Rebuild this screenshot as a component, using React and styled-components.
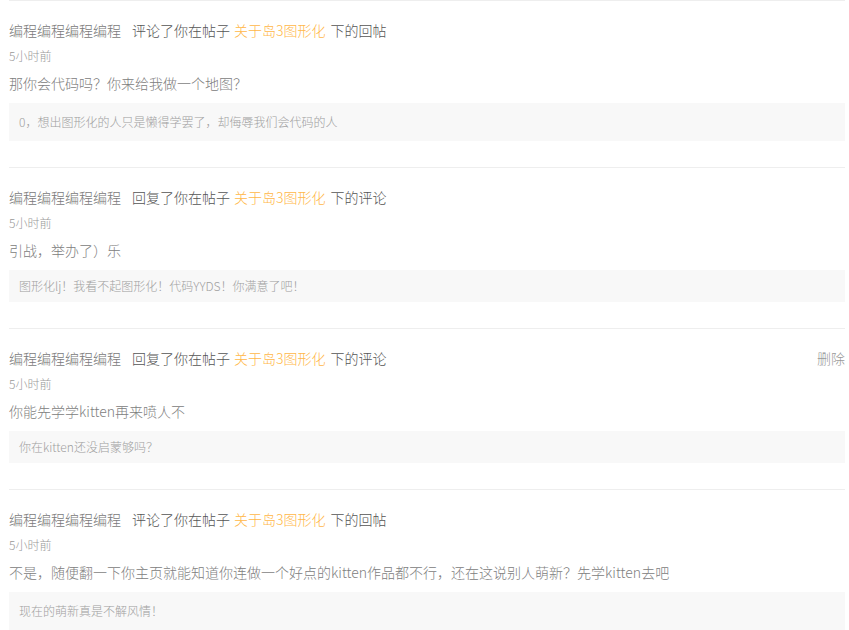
import React from 'react';
import styled, { createGlobalStyle } from 'styled-components';

const GlobalStyle = createGlobalStyle`
	html, body {
		margin: 0;
		padding: 0;
		background: #fff;
	}
	body {
		font-family: "Noto Sans CJK SC", "Noto Sans", sans-serif;
		font-weight: 300;
	}
`;

const List = styled.div`
	padding: 0 4px 0 9px;
	height: 630px;
	overflow: hidden;
`;

const Item = styled.div`
	border-top: 1px solid #eeeeee;
	padding: 20px 0 26px;
`;

const Head = styled.div`
	display: flex;
	align-items: flex-start;
	justify-content: space-between;
	height: 22px;
	font-size: 14px;
	line-height: 18px;
`;

const HeadText = styled.div`
	color: #555;
	white-space: nowrap;
`;

const Name = styled.span`
	color: #7a7a7a;
	margin-right: 11px;
`;

const PostLink = styled.span`
	color: #ffb748;
	margin: 0 5px 0 4px;
`;

const Delete = styled.span`
	color: #999;
	cursor: pointer;
`;

const Time = styled.div`
	margin-top: 4px;
	font-size: 12px;
	line-height: 18px;
	color: #999;
`;

const Content = styled.div`
	margin-top: 7px;
	font-size: 14px;
	line-height: 22px;
	color: #808080;
`;

const Quote = styled.div`
	margin-top: 9px;
	background: #f8f8f8;
	padding: ${props => (props.$tall ? '10px' : '7px')} 10px;
	font-size: 12px;
	line-height: 18px;
	color: #a0a0a0;
`;

const data = [
	{
		action: '评论了你在帖子',
		tail: '下的回帖',
		content: '那你会代码吗？你来给我做一个地图？',
		quote: '0，想出图形化的人只是懒得学罢了，却侮辱我们会代码的人',
		tall: true,
	},
	{
		action: '回复了你在帖子',
		tail: '下的评论',
		content: '引战，举办了）乐',
		quote: '图形化lj！我看不起图形化！代码YYDS！你满意了吧！',
	},
	{
		action: '回复了你在帖子',
		tail: '下的评论',
		content: '你能先学学kitten再来喷人不',
		quote: '你在kitten还没启蒙够吗？',
		canDelete: true,
	},
	{
		action: '评论了你在帖子',
		tail: '下的回帖',
		content: '不是，随便翻一下你主页就能知道你连做一个好点的kitten作品都不行，还在这说别人萌新？先学kitten去吧',
		quote: '现在的萌新真是不解风情！',
		tall: true,
	},
];

function Message(props) {
	return (
		<Item>
			<Head>
				<HeadText>
					<Name>编程编程编程编程</Name>
					{props.action}
					<PostLink>关于岛3图形化</PostLink>
					{props.tail}
				</HeadText>
				{props.canDelete && <Delete>删除</Delete>}
			</Head>
			<Time>5小时前</Time>
			<Content>{props.content}</Content>
			<Quote $tall={props.tall}>{props.quote}</Quote>
		</Item>
	);
}

export default function App() {
	return (
		<>
			<GlobalStyle />
			<List>
				{data.map((m, i) => (
					<Message key={i} {...m} />
				))}
			</List>
		</>
	);
}
